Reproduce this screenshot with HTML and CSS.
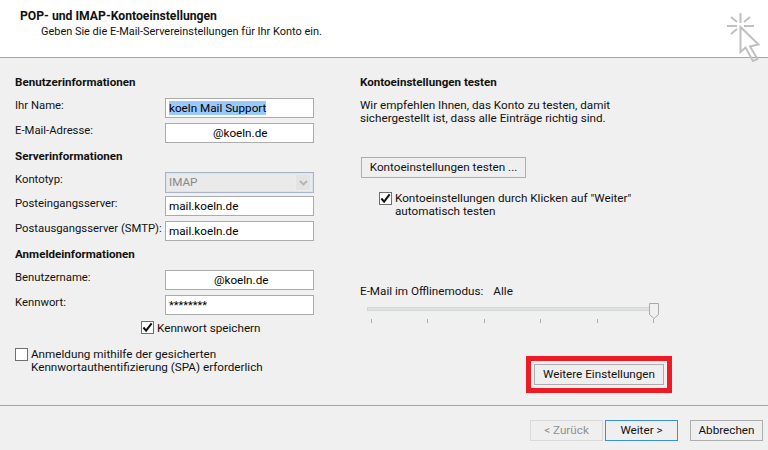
FILE: index.html
```html
<!DOCTYPE html>
<html lang="de">
<head>
<meta charset="utf-8">
<title>POP- und IMAP-Kontoeinstellungen</title>
<link rel="stylesheet" href="styles.css">
</head>
<body>
<div class="dialog">
  <header class="head">
    <div class="head-text">
      <div class="head-title">POP- und IMAP-Kontoeinstellungen</div>
      <div class="head-sub">Geben Sie die E-Mail-Servereinstellungen für Ihr Konto ein.</div>
    </div>
    <svg class="wand" width="44" height="56" viewBox="56 0 44 56" fill="none" stroke="#c0c0c0" stroke-width="2">
      <path d="M72.5 4v10M59 17h10M76 17h10M63 8l6 5M82 8l-6 5M63 25l6-5"/>
      <path d="M72.5 18 90.500 35.500 82 37.500 89.500 50 85 52 77.500 38.500 72.500 43z" stroke-linejoin="miter"/>
    </svg>
  </header>
  <main class="body">
    <section class="col-left">
      <h2 class="sect sect-first">Benutzerinformationen</h2>
      <div class="row"><span class="lab">Ihr Name:</span><div class="field"><span class="sel">koeln Mail Support</span></div></div>
      <div class="row"><span class="lab">E-Mail-Adresse:</span><div class="field field-at">@koeln.de</div></div>
      <h2 class="sect">Serverinformationen</h2>
      <div class="row row-tight"><span class="lab">Kontotyp:</span>
        <div class="combo"><span>IMAP</span><span class="combo-btn"><svg width="9" height="6" viewBox="0 0 9 6" fill="none" stroke="#b4b4b4" stroke-width="1.800"><path d="M1 1l3.500 3.500L8 1"/></svg></span></div>
      </div>
      <div class="row"><span class="lab">Posteingangsserver:</span><div class="field">mail.koeln.de</div></div>
      <div class="row"><span class="lab">Postausgangsserver (SMTP):</span><div class="field">mail.koeln.de</div></div>
      <h2 class="sect">Anmeldeinformationen</h2>
      <div class="row"><span class="lab">Benutzername:</span><div class="field field-at2">@koeln.de</div></div>
      <div class="row"><span class="lab">Kennwort:</span><div class="field field-pw">********</div></div>
      <label class="check check-save"><span class="box"><svg width="12" height="11" viewBox="0 0 12 11" fill="none" stroke="#111" stroke-width="2.200"><path d="M1.500 5.500 4.500 9 10.500 1"/></svg></span><span class="save-text">Kennwort speichern</span></label>
      <label class="check check-spa"><span class="box"></span><span>Anmeldung mithilfe der gesicherten<br>Kennwortauthentifizierung (SPA) erforderlich</span></label>
    </section>
    <section class="col-right">
      <h2 class="sect sect-first">Kontoeinstellungen testen</h2>
      <p class="para">Wir empfehlen Ihnen, das Konto zu testen, damit<br>sichergestellt ist, dass alle Einträge richtig sind.</p>
      <button class="btn btn-test" type="button">Kontoeinstellungen testen ...</button>
      <label class="check check-auto"><span class="box"><svg width="12" height="11" viewBox="0 0 12 11" fill="none" stroke="#111" stroke-width="2.200"><path d="M1.500 5.500 4.500 9 10.500 1"/></svg></span><span>Kontoeinstellungen durch Klicken auf "Weiter"<br>automatisch testen</span></label>
      <div class="offline"><span>E-Mail im Offlinemodus:</span><span>Alle</span></div>
      <div class="slider">
        <div class="track"></div>
        <svg class="thumb" width="10" height="16" viewBox="0 0 10 16"><path d="M.5.500h9v11l-4.500 4-4.500-4z" fill="#f0f0f0" stroke="#a9a9a9"/></svg>
        <div class="ticks"><i></i><i></i><i></i><i></i><i></i><i></i></div>
      </div>
      <div class="more-wrap"><div class="mark"><button class="btn btn-more" type="button">Weitere Einstellungen</button></div></div>
    </section>
  </main>
  <footer class="foot">
    <button class="btn btn-foot btn-off" type="button">&lt; Zurück</button>
    <button class="btn btn-foot btn-def" type="button">Weiter &gt;</button>
    <button class="btn btn-foot btn-cancel" type="button">Abbrechen</button>
  </footer>
</div>
</body>
</html>
```
FILE: styles.css
```css
* { box-sizing: border-box; }
html, body { margin: 0; padding: 0; }
body { width: 768px; height: 450px; overflow: hidden; background: #f0f0f0; color: #111; font: 11.7px/13px Roboto, "Open Sans", sans-serif; }
.dialog { display: flex; flex-direction: column; height: 450px; }
.head { height: 58px; background: #fff; border-bottom: 1px solid #a6a6a6; display: flex; justify-content: space-between; padding: 9px 0 0 20px; }
.head-title { font-size: 12.2px; font-weight: 700; line-height: 14px; }
.head-sub { margin: 2px 0 0 21px; font-size: 10.95px; line-height: 14px; }
.body { height: 348px; border-bottom: 1px solid #a6a6a6; display: flex; }
.col-left { width: 360px; padding: 0 0 0 15px; flex: none; }
.col-right { flex: 1; }
.sect { margin: 0; font-size: 11.6px; font-weight: 700; line-height: 14px; }
.sect-first { margin-top: 17px; }
.col-left .sect { margin-bottom: 9px; }
.col-left .row + .sect { margin-top: 6px; }
.row { display: flex; height: 20px; margin-bottom: 5px; }
.row-tight { margin-bottom: 4px; }
.lab { width: 150px; flex: none; font-size: 11.3px; line-height: 13px; padding-top: 1px; white-space: nowrap; }
.field { width: 149px; height: 20px; background: #fff; border: 1px solid #ababab; padding: 0 3px; line-height: 18px; color: #000; }
.sel { background: #99c9ff; }
.field-at { padding-left: 47px; }
.field-at2 { padding-left: 48px; }
.field-pw { line-height: 20px; font-size: 11px; }
.combo { width: 149px; height: 21px; border: 1px solid #a5b5c7; box-shadow: inset 0 0 0 1px #dde3ea; background: #eaeaea; color: #888; padding: 0 3px; line-height: 19px; display: flex; justify-content: space-between; }
.combo-btn { width: 16px; height: 17px; margin: 1px -1px 0 0; background: #e3e3e3; border: 1px solid #ececec; display: flex; align-items: center; justify-content: center; }
.check { display: flex; align-items: flex-start; }
.box { width: 13px; height: 13px; border: 1px solid #6f6f6f; background: #fff; flex: none; margin-right: 3px; display: flex; align-items: center; justify-content: center; }
.check-save { margin: 6px 0 0 126px; }
.save-text { padding-top: 1px; }
.check-spa { margin-top: 13px; }
.para { margin: 10px 0 0; }
.btn { display: block; margin: 0; padding: 0; height: 21px; font: inherit; line-height: 19px; color: #111; background: #efefef; border: 1px solid #adadad; text-align: center; }
.btn-test { width: 165px; margin: 32px 0 0 1px; }
.check-auto { margin: 14px 0 0 19px; }
.offline { margin-top: 67px; display: flex; gap: 10px; }
.slider { position: relative; height: 24px; width: 300px; margin: 5px 0 0 7px; }
.track { height: 4px; width: 285px; background: #dfe3e3; border: 1px solid #d3d6d6; position: absolute; top: 4px; left: 0; }
.thumb { position: absolute; left: 282px; top: 0; }
.ticks { position: absolute; top: 16px; left: 4px; width: 283px; display: flex; justify-content: space-between; }
.ticks i { width: 1px; height: 4px; background: #b0b0b0; display: block; }
.more-wrap { display: flex; margin: 29px 0 0 166px; }
.mark { border: 5px solid #ed1c24; padding: 3px; }
.btn-more { width: 130px; }
.foot { flex: 1; display: flex; padding: 14px 5px 0 0; justify-content: flex-end; align-items: flex-start; }
.btn-foot { width: 73px; }
.btn-off { color: #8f8f8f; border-color: #d9d9d9; }
.btn-def { margin-left: 2px; border-color: #3b8fdd; }
.btn-cancel { margin-left: 12px; }
```
